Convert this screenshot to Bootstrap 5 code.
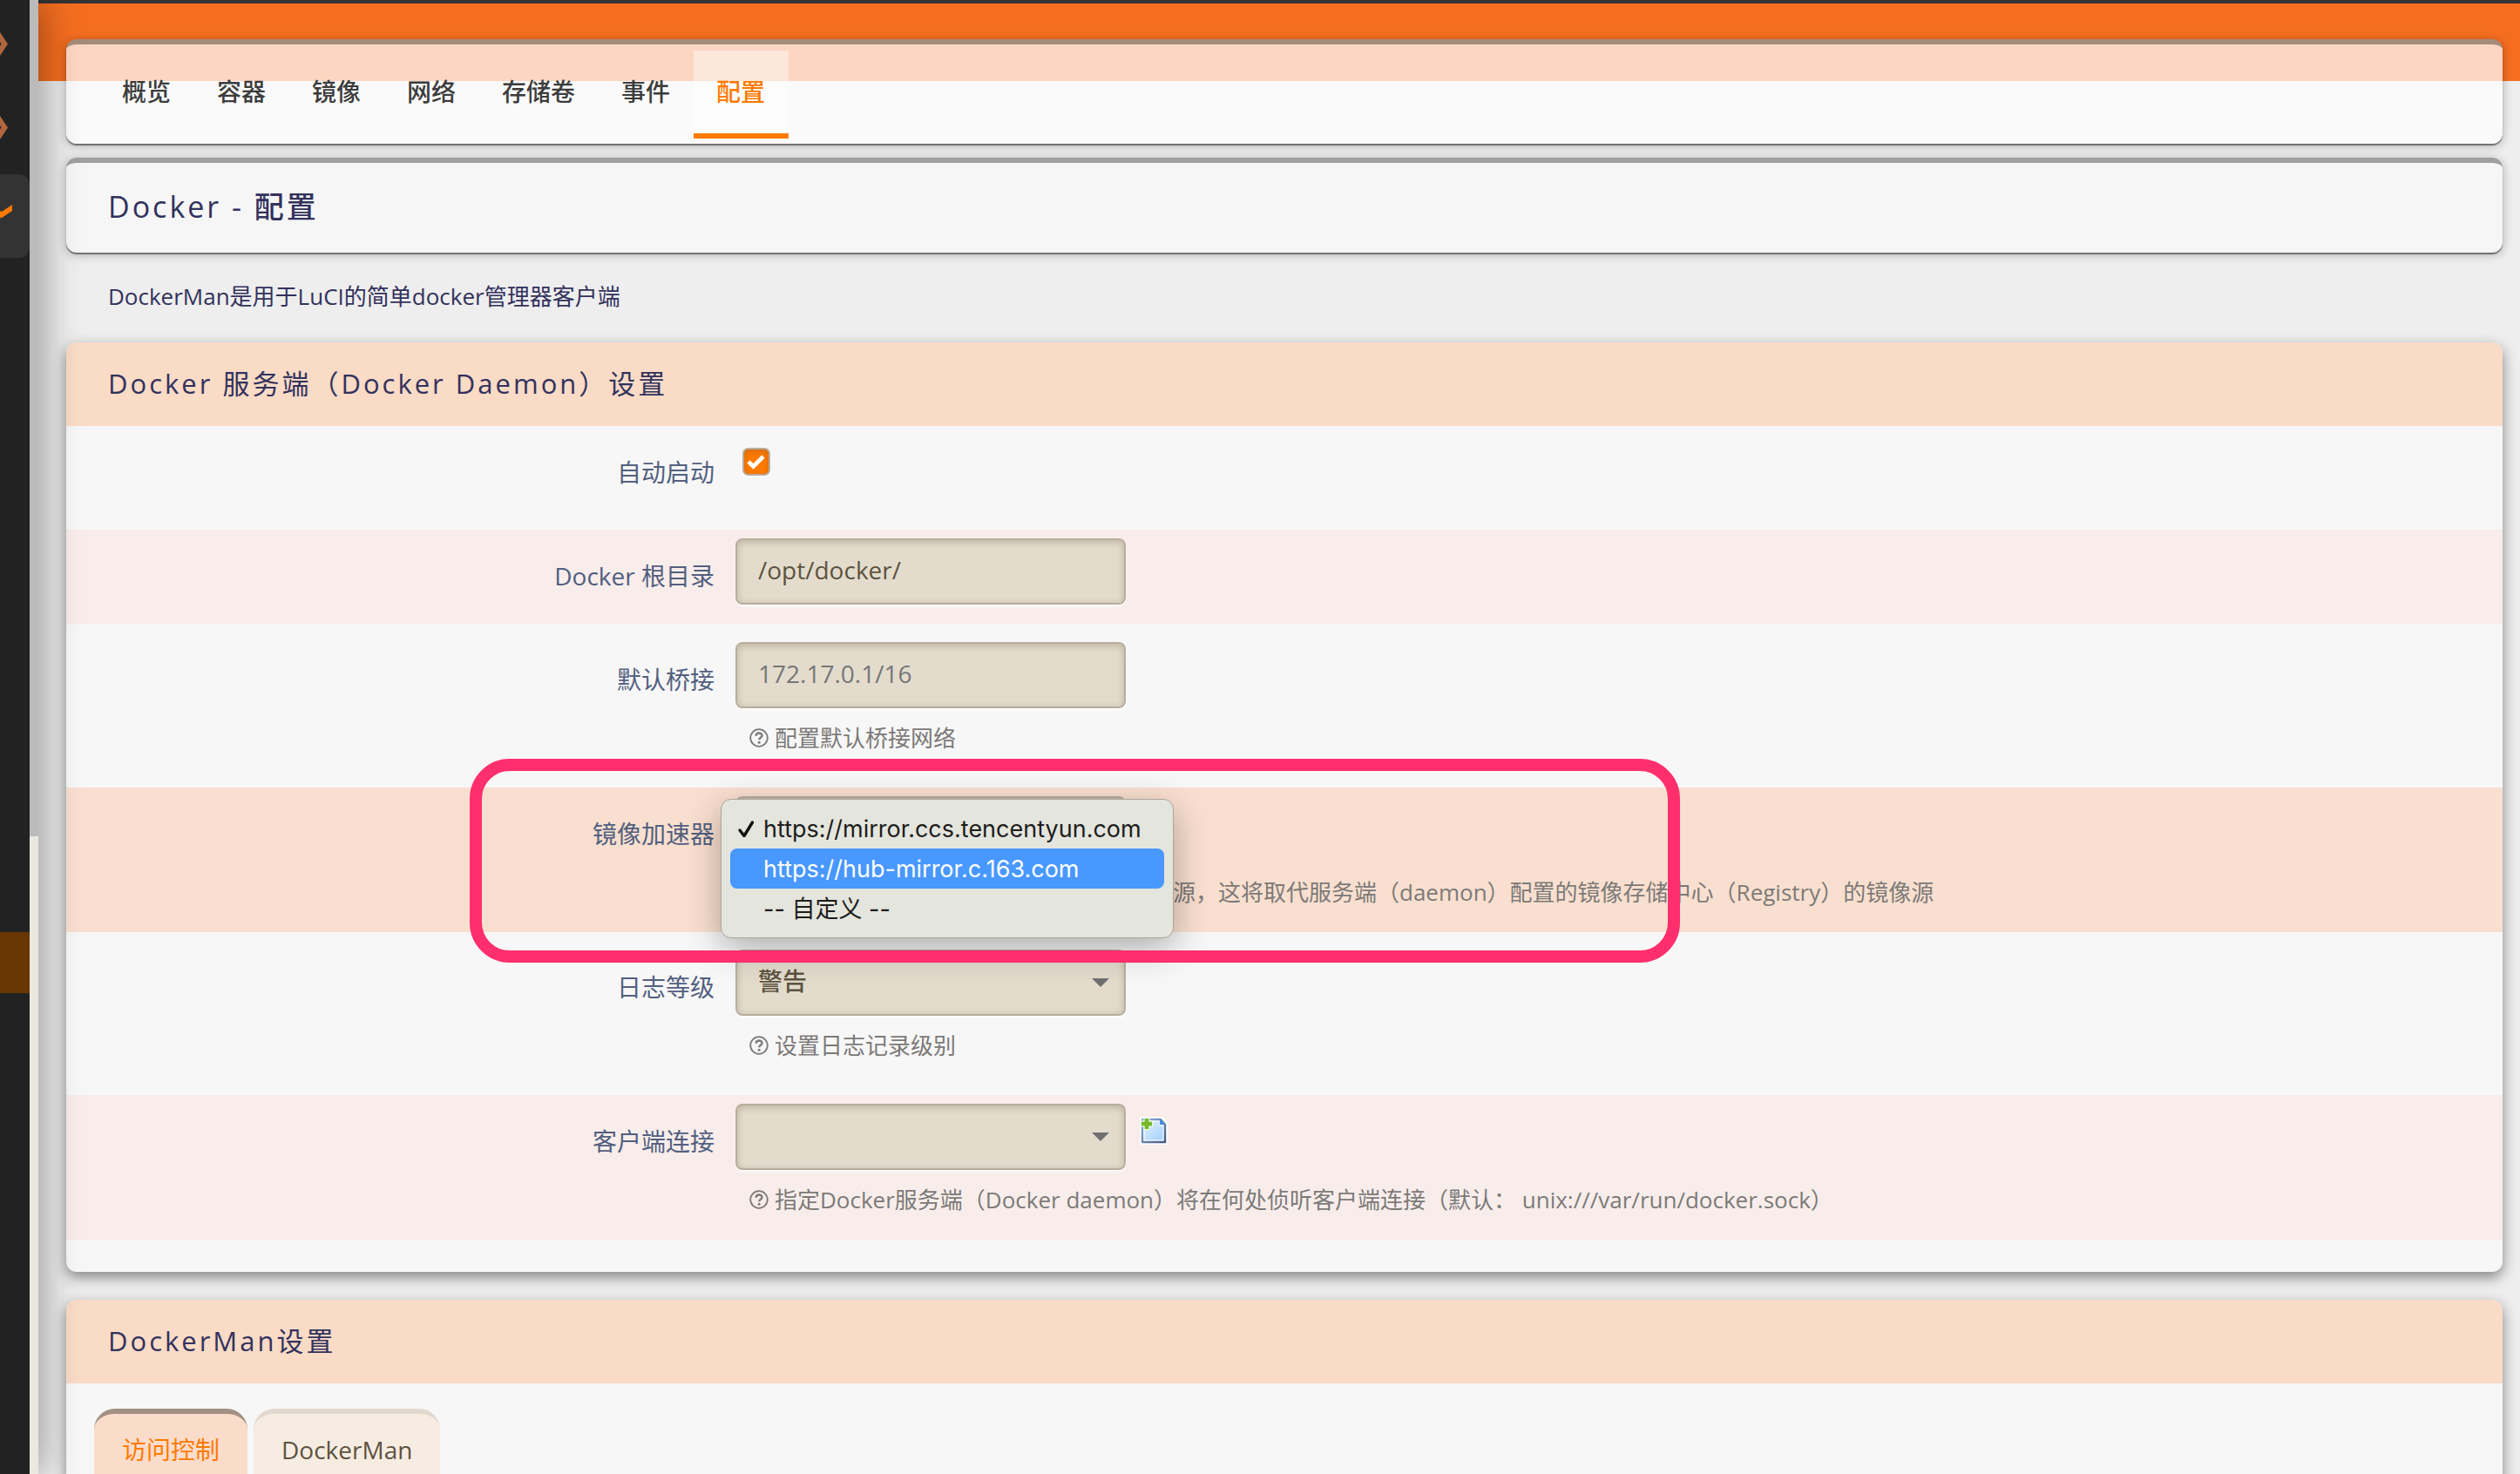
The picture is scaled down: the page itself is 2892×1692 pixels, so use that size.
<!DOCTYPE html>
<html lang="zh-CN">
<head>
<meta charset="utf-8">
<meta name="viewport" content="width=device-width, initial-scale=1">
<title>Docker - 配置</title>
<link href="https://cdn.jsdelivr.net/npm/bootstrap@5.3.0/dist/css/bootstrap.min.css" rel="stylesheet">
<style>
:root { --ink: #32325d; --label: #525f7f; --accent: #ff7a00; }
body { background: #eee; color: var(--ink); font-family: "Open Sans", "Noto Sans CJK SC", sans-serif; font-size: 26px; line-height: 36px; }

/* side menu */
.side { width: 44px; position: relative; z-index: 2; box-shadow: 4px 0 44px rgba(0,0,0,.38); }
.side-menu { width: 34px; padding-top: 8px; background: #222; }
.side-link { display: block; height: 96px; border-radius: 0 12px 12px 0; }
.side-link.active { background: #333; }
.side-link svg { display: block; }
.side-foot { height: 70px; margin-top: 774px; background: #693703; }
.side-scroll { width: 10px; background: #ebe8e0; }
.side-thumb { height: 960px; background: #bbb; }

/* page header */
.topline { height: 4px; background: #333; }
.masthead { height: 89px; background: #f56e20; }
.content-wrap { margin-top: -48px; padding: 0 20px 0 32px; position: relative; }
.panel { border-radius: 12px; border-top: 6px solid rgba(0,0,0,.35); box-shadow: 0 2px 1px rgba(0,0,0,.45), 0 2px 12px rgba(0,0,0,.28); }
.panel-tabs { background: rgba(255,255,255,.72); padding: 7px 38px 6px; margin-bottom: 16px; }
.panel-tabs .nav-link { font-size: 28px; line-height: 40px; font-weight: 500; padding: 27px 27px 28px 26px; color: #3c3c3c; border-bottom: 6px solid transparent; border-radius: 0; }
.panel-tabs .nav-link.active { color: var(--accent); background: rgba(255,255,255,.4); border-bottom-color: var(--accent); }
.panel-title { background: #f6f6f6; padding: 25px 48px 28px; }
.panel-title h1 { font-size: 34px; line-height: 50px; font-weight: 500; letter-spacing: 3px; margin: 0; }
.intro { margin: 0; padding: 32px 48px 35px; }

/* settings sections */
.sect { border-radius: 12px; background: #f7f7f7; margin-bottom: 32px; box-shadow: 0 6px 16px rgba(0,0,0,.45); padding-bottom: 37px; }
.sect-head { background: #fadbc6; border-radius: 12px 12px 0 0; padding: 22px 48px 24px; margin: 0; font-size: 31px; line-height: 50px; font-weight: 400; letter-spacing: 3px; }
.opt { padding: 10px 0 23px; position: relative; }
.opt-plain { margin: 10px 0 11px; }
.opt-first { margin: 0 0 10px; min-height: 109px; }
.opt-pink { background: #f8edeb; }
.opt-peach { background: #f9dfcf; }
.opt-label { flex: 0 0 768px; padding: 23px 24px 0 0; text-align: right; font-size: 28px; line-height: 40px; color: var(--label); }
.field { width: 448px; height: 76px; font-size: 28px; line-height: 40px; padding: 14px 24px 18px; color: #5d5340; background-color: #e3dccd; border: 2px solid #b9ad9c; border-radius: 8px; box-shadow: inset 0 2px 8px rgba(90,75,50,.3), 0 2px 3px rgba(255,255,255,.9); }
.field::placeholder { color: #777; opacity: 1; }
.field.form-select { font-weight: 500; background-image: url("data:image/svg+xml,%3Csvg xmlns='http://www.w3.org/2000/svg' viewBox='0 0 20 10'%3E%3Cpath fill='%23707070' d='M0 0h20L10 10z'/%3E%3C/svg%3E"); background-size: 20px 10px; background-position: right 17px top 31px; }
.tick { width: 32px; height: 32px; margin: 15px 0 0 8px; border: 2px solid #b9ad9c; border-radius: 8px; box-shadow: inset 0 2px 6px rgba(150,90,40,.5), 0 2px 2px #fff; }
.tick:checked { background-color: var(--accent); border-color: #b9ad9c; background-size: 22px 22px; background-image: url("data:image/svg+xml,%3Csvg xmlns='http://www.w3.org/2000/svg' viewBox='0 0 22 22'%3E%3Cpath fill='none' stroke='white' stroke-width='4.6' d='M2 11l5.5 5.5L19 5'/%3E%3C/svg%3E"); }
.hint { display: flex; align-items: center; gap: 7px; height: 57px; padding: 10px 0 0 16px; color: #7c7a78; white-space: nowrap; }
.hint svg { flex: none; }
.hint-after-list { padding-left: 502px; }
.add-btn { margin-left: 16px; margin-top: 15px; height: 32px; line-height: 0; border-radius: 0; }

/* opened list */
.picker { position: absolute; left: -17px; top: 3px; width: 520px; padding: 10px; background: #e4e5dd; border: 1px solid #aaa69c; border-radius: 12px; box-shadow: 0 12px 40px rgba(0,0,0,.3); font-family: Inter, "Noto Sans CJK SC", sans-serif; z-index: 3; display: block; }
.picker .dropdown-item { display: flex; align-items: center; height: 46px; padding: 2px 0 0 8px; font-size: 27px; line-height: 44px; color: #1d1d1d; border-radius: 8px; }
.picker .dropdown-item.active { color: #fff; background: #4898ff; }
.picker svg, .picker .blank { width: 22px; height: 22px; margin-right: 8px; flex: none; }
.marker { position: absolute; left: 463px; top: -33px; width: 1389px; height: 234px; border: 14px solid #ff2f6d; border-radius: 46px; z-index: 4; pointer-events: none; }

/* section tabs */
.sect-tabs { padding: 29px 32px 0; gap: 7px; }
.sect-tabs .nav-link { font-size: 28px; line-height: 40px; padding: 21px 32px; color: #5d5340; background: #f7ece2; border: 0; border-top: 6px solid #e2d8cf; border-radius: 24px 24px 0 0; }
.sect-tabs .nav-link.active { color: var(--accent); background: #fadccb; border-top-color: #a38f83; }
</style>
<script src="https://cdn.jsdelivr.net/npm/bootstrap@5.3.0/dist/js/bootstrap.bundle.min.js"></script>
</head>
<body class="d-flex vh-100 overflow-hidden">
<svg width="0" height="0" class="position-absolute" aria-hidden="true">
  <symbol id="q" viewBox="0 0 22 22"><circle cx="11" cy="11" r="9.8" fill="none" stroke="currentColor" stroke-width="1.8"/><path d="M7.7 8.8c0-4.4 6.8-4.2 6.8-.4 0 2.400-3.300 2.300-3.300 4.800" fill="none" stroke="currentColor" stroke-width="2.400"/><circle cx="11.200" cy="16.200" r="1.500" fill="currentColor"/></symbol>
</svg>

<aside class="side d-flex flex-shrink-0">
  <nav class="side-menu" aria-label="菜单">
    <a class="side-link" href="#" aria-label="展开"><svg width="34" height="96"><path d="M0 29L9 42.500 0 56v-11.500L1.500 42.500 0 40z" fill="#b0663f"/></svg></a>
    <a class="side-link" href="#" aria-label="展开"><svg width="34" height="96"><path d="M0 29L9 42.500 0 56v-11.500L1.500 42.500 0 40z" fill="#b0663f"/></svg></a>
    <a class="side-link active" href="#" aria-label="收起"><svg width="34" height="96"><path d="M0 42l2 1 12-8v7L2 50H0z" fill="#ff7a00"/></svg></a>
    <div class="side-foot"></div>
  </nav>
  <div class="side-scroll"><div class="side-thumb"></div></div>
</aside>

<main class="flex-grow-1">
  <div class="topline"></div>
  <header class="masthead"></header>
  <div class="content-wrap">
    <div class="panel panel-tabs">
      <nav class="nav">
        <a class="nav-link" href="#">概览</a>
        <a class="nav-link" href="#">容器</a>
        <a class="nav-link" href="#">镜像</a>
        <a class="nav-link" href="#">网络</a>
        <a class="nav-link" href="#">存储卷</a>
        <a class="nav-link" href="#">事件</a>
        <a class="nav-link active" href="#" aria-current="page">配置</a>
      </nav>
    </div>

    <div class="panel panel-title"><h1>Docker - 配置</h1></div>
    <p class="intro">DockerMan是用于LuCI的简单docker管理器客户端</p>

    <section class="sect">
      <h2 class="sect-head">Docker 服务端（Docker Daemon）设置</h2>

      <div class="opt opt-first d-flex">
        <label class="opt-label" for="auto">自动启动</label>
        <div><input class="form-check-input tick" type="checkbox" id="auto" checked></div>
      </div>

      <div class="opt opt-pink d-flex">
        <label class="opt-label" for="root">Docker 根目录</label>
        <div><input class="form-control field" type="text" id="root" value="/opt/docker/"></div>
      </div>

      <div class="opt opt-plain d-flex">
        <label class="opt-label" for="bip">默认桥接</label>
        <div>
          <input class="form-control field" type="text" id="bip" placeholder="172.17.0.1/16">
          <div class="hint"><svg width="22" height="22"><use href="#q"/></svg><span>配置默认桥接网络</span></div>
        </div>
      </div>

      <div class="opt opt-peach d-flex">
        <label class="opt-label" for="mirror">镜像加速器</label>
        <div class="position-relative">
          <select class="form-select field" id="mirror"><option></option></select>
          <div class="hint hint-after-list"><span>源，这将取代服务端（daemon）配置的镜像存储中心（Registry）的镜像源</span></div>
          <div class="picker dropdown-menu show">
            <button type="button" class="dropdown-item"><svg viewBox="0 0 22 22"><path d="M3 12l5 6.500L17.500 3" fill="none" stroke="#111" stroke-width="3.400" stroke-linecap="round" stroke-linejoin="round"/></svg>https://mirror.ccs.tencentyun.com</button>
            <button type="button" class="dropdown-item active"><span class="blank"></span>https://hub-mirror.c.163.com</button>
            <button type="button" class="dropdown-item"><span class="blank"></span>-- 自定义 --</button>
          </div>
        </div>
        <div class="marker"></div>
      </div>

      <div class="opt opt-plain d-flex">
        <label class="opt-label" for="level">日志等级</label>
        <div>
          <select class="form-select field" id="level"><option>警告</option></select>
          <div class="hint"><svg width="22" height="22"><use href="#q"/></svg><span>设置日志记录级别</span></div>
        </div>
      </div>

      <div class="opt opt-pink d-flex">
        <label class="opt-label" for="hosts">客户端连接</label>
        <div>
          <div class="d-flex">
            <select class="form-select field" id="hosts"><option></option></select>
            <button type="button" class="btn p-0 border-0 add-btn" aria-label="添加">
              <svg width="32" height="32" viewBox="0 0 32 32">
                <defs><linearGradient id="pg" x1="0" y1="0" x2="1" y2="1"><stop offset="0" stop-color="#e4f2ff"/><stop offset="1" stop-color="#9fcdfb"/></linearGradient><linearGradient id="pe" x1="0" y1="0" x2="1" y2="1"><stop offset="0" stop-color="#8fb4e0"/><stop offset="1" stop-color="#46597f"/></linearGradient></defs>
                <path d="M0 0h26l6 6v26H0z" fill="#fff"/>
                <path d="M3 3h21l5 6v20H3z" fill="url(#pg)" stroke="url(#pe)" stroke-width="2.500" stroke-linejoin="round"/>
                <path d="M5 5h18v5h4v17H5z" fill="none" stroke="#fff" stroke-opacity=".7" stroke-width="1.500"/>
                <path d="M23 2v7h6z" fill="#4b8ce0"/>
                <path d="M8 0.500v15M0.500 8h15" stroke="#e9f6dc" stroke-width="7"/>
                <path d="M8 2v12M2 8h12" stroke="#76b82a" stroke-width="4.600"/>
              </svg>
            </button>
          </div>
          <div class="hint"><svg width="22" height="22"><use href="#q"/></svg><span>指定Docker服务端（Docker daemon）将在何处侦听客户端连接（默认： unix:///var/run/docker.sock）</span></div>
        </div>
      </div>
    </section>

    <section class="sect">
      <h2 class="sect-head">DockerMan设置</h2>
      <div class="nav sect-tabs">
        <button type="button" class="nav-link active">访问控制</button>
        <button type="button" class="nav-link">DockerMan</button>
      </div>
    </section>
  </div>
</main>
</body>
</html>
